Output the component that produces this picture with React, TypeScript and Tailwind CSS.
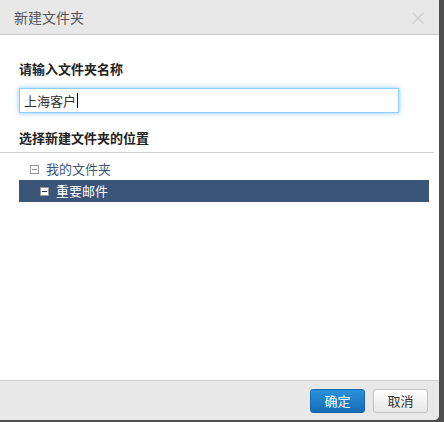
import React from "react";

const font = { fontFamily: '"Noto Sans CJK SC", "Noto Sans", sans-serif' };

function MinusBox({ filled }: { filled?: boolean }) {
  return (
    <span
      className={`inline-flex w-[9px] h-[9px] items-center justify-center border ${
        filled ? "bg-white border-[#999]" : "border-[#999] bg-transparent"
      }`}
    >
      <span className={`block w-[5px] h-px ${filled ? "bg-[#333]" : "bg-[#888]"}`} />
    </span>
  );
}

export default function App() {
  return (
    <div className="w-[444px] h-[422px] bg-[#4f4f4f] overflow-hidden" style={font}>
      <div className="w-[439px] h-[420px] bg-white rounded-br-[5px] flex flex-col overflow-hidden">
        {/* header */}
        <div className="h-[35px] shrink-0 bg-[#e8e8e8] border-b border-[#c8c8c8] flex items-center justify-between pl-[14px] pr-[12px]">
          <span className="text-[14px] text-[#555]">新建文件夹</span>
          <span className="text-[18px] leading-none text-[#cfcfcf]">×</span>
        </div>

        {/* body */}
        <div className="flex-1 pt-[24px]">
          <div className="pl-[19px] text-[13px] leading-[20px] font-bold text-[#222]">请输入文件夹名称</div>
          <div className="ml-[19px] mt-[9px] w-[380px] h-[25px] border border-[#8ccdfb] shadow-[0_0_5px_rgba(102,185,245,0.8)] flex items-center pl-[4px] text-[13px] text-[#333]">
            上海客户
            <span className="inline-block w-px h-[15px] bg-black ml-px" />
          </div>
          <div className="pl-[19px] mt-[15px] text-[13px] leading-[20px] font-bold text-[#222]">选择新建文件夹的位置</div>
          <div className="mt-[4px] mr-[5px] border-t border-[#cfcfcf]" />
          <div className="mt-[5px] ml-[19px] mr-[10px]">
            <div className="h-[22px] flex items-center pl-[11px] gap-[7px] text-[13px] text-[#3e5779]">
              <MinusBox />
              <span>我的文件夹</span>
            </div>
            <div className="h-[22px] flex items-center pl-[21px] gap-[7px] bg-[#3b5579] text-[13px] text-white">
              <MinusBox filled />
              <span>重要邮件</span>
            </div>
          </div>
        </div>

        {/* footer */}
        <div className="h-[40px] shrink-0 bg-[#e8e8e8] border-t border-[#cfcfcf] flex items-center justify-end gap-[8px] pr-[11px]">
          <button className="w-[55px] h-[24px] rounded-[3px] border border-[#1565a8] bg-gradient-to-b from-[#2a92dc] to-[#146db5] text-white text-[13px]">
            确定
          </button>
          <button className="w-[55px] h-[24px] rounded-[3px] border border-[#c2c2c2] bg-gradient-to-b from-white to-[#e6e6e6] text-[#333] text-[13px]">
            取消
          </button>
        </div>
      </div>
    </div>
  );
}
